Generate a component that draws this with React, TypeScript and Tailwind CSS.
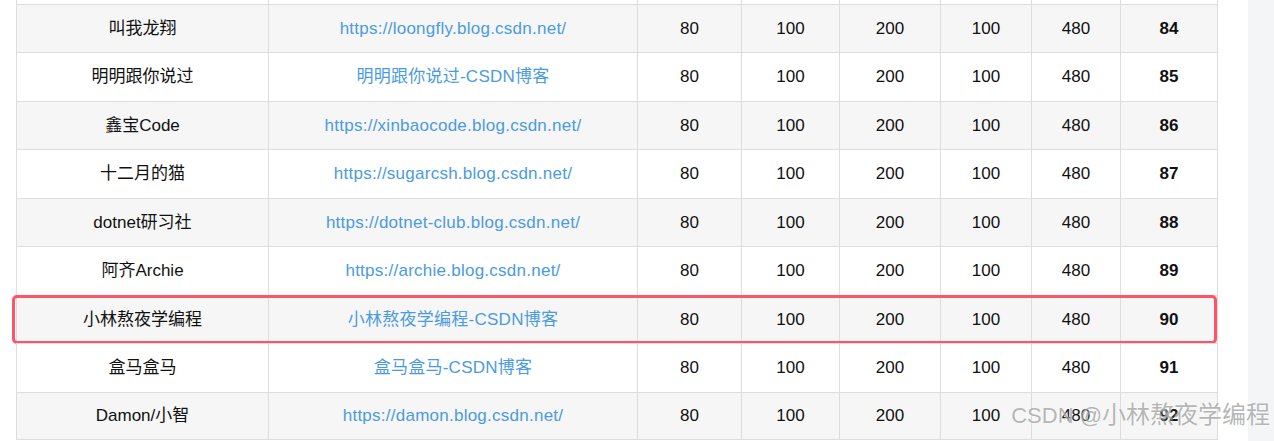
import React from 'react';

type Row = { name: string; link: string; score: number };

const rows: Row[] = [
  { name: '叫我龙翔', link: 'https://loongfly.blog.csdn.net/', score: 84 },
  { name: '明明跟你说过', link: '明明跟你说过-CSDN博客', score: 85 },
  { name: '鑫宝Code', link: 'https://xinbaocode.blog.csdn.net/', score: 86 },
  { name: '十二月的猫', link: 'https://sugarcsh.blog.csdn.net/', score: 87 },
  { name: 'dotnet研习社', link: 'https://dotnet-club.blog.csdn.net/', score: 88 },
  { name: '阿齐Archie', link: 'https://archie.blog.csdn.net/', score: 89 },
  { name: '小林熬夜学编程', link: '小林熬夜学编程-CSDN博客', score: 90 },
  { name: '盒马盒马', link: '盒马盒马-CSDN博客', score: 91 },
  { name: 'Damon/小智', link: 'https://damon.blog.csdn.net/', score: 92 },
];

const grid = 'grid w-[1202px] grid-cols-[252px_369px_104px_98px_101px_91px_89px_98px]';
const cell = 'flex items-center justify-center border-l border-[#dddddd]';

const App = () => {
  return (
    <div
      className="relative flex h-[441px] w-full overflow-hidden bg-white text-[17px] text-[#111111]"
      style={{ fontFamily: '"Liberation Sans", "Noto Sans CJK SC", sans-serif' }}
    >
      <div className="w-[1248px] shrink-0 pl-4">
        {/* cut-off row above */}
        <div className={`${grid} h-[4px]`}>
          {Array.from({ length: 8 }).map((_, i) => (
            <div key={i} className={`${cell} ${i === 7 ? 'border-r' : ''}`} />
          ))}
        </div>

        {rows.map((r, idx) => (
          <div
            key={r.name}
            className={`${grid} relative h-[48.44px] border-t border-[#dddddd] ${
              idx % 2 === 0 ? 'bg-[#f6f6f6]' : 'bg-white'
            } ${idx === rows.length - 1 ? 'border-b' : ''}`}
          >
            <div className={cell}>{r.name}</div>
            <div className={`${cell} text-[#4b9be0] tracking-[0.25px]`}>{r.link}</div>
            <div className={cell}>80</div>
            <div className={cell}>100</div>
            <div className={cell}>200</div>
            <div className={cell}>100</div>
            <div className={cell}>480</div>
            <div className={`${cell} border-r font-bold`}>{r.score}</div>
            {r.score === 90 && (
              <div className="pointer-events-none absolute -top-px -left-1 right-px h-[49px] rounded-[5px] border-[3px] border-[#ff5468]" />
            )}
          </div>
        ))}
      </div>

      <div className="flex-1 bg-[#f4f5f7]" />

      <div className="pointer-events-none absolute right-[4px] bottom-[8px] flex items-baseline text-[rgba(110,110,110,0.5)] [text-shadow:0_0_2px_#ffffff]">
        <span className="text-[22px]">CSDN @</span>
        <span className="text-[24px]">小林熬夜学编程</span>
      </div>
    </div>
  );
};

export default App;
